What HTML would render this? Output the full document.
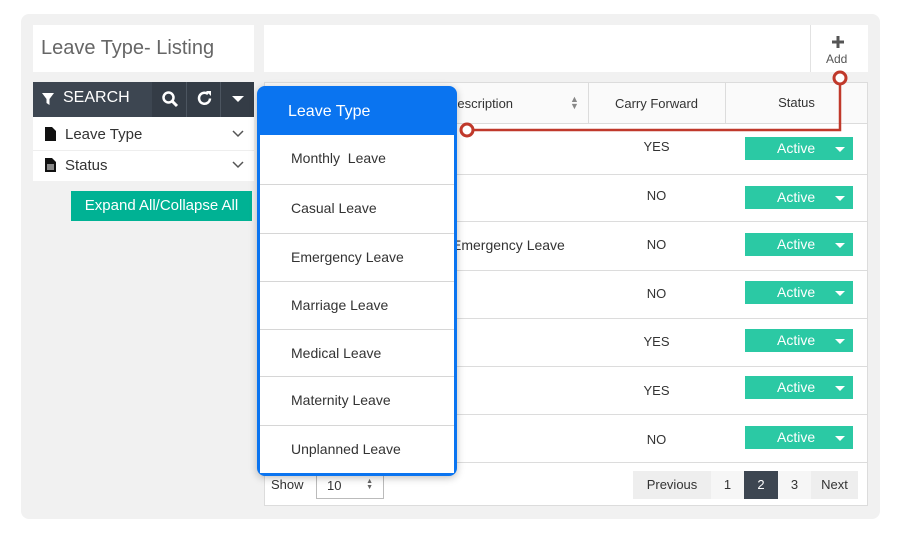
<!DOCTYPE html><html><head><style>
*{box-sizing:border-box;margin:0;padding:0}
body{width:900px;height:534px;background:#fff;font-family:"Liberation Sans",sans-serif;position:relative;overflow:hidden;color:#333}
.a{position:absolute}
.wrap{left:21px;top:14px;width:859px;height:505px;background:#f1f1f1;border-radius:8px}
.row{left:264px;width:604px;border-top:1px solid #dcdcdc}
.yn{left:588px;width:137px;text-align:center;font-size:13px}
.act{left:745px;width:108px;height:23px;background:#2bc9a4;color:#fff;font-size:14px;line-height:23px;padding-left:32px}
.act:after{content:"";position:absolute;right:8px;top:10px;border:5px solid transparent;border-top-color:#fff;border-bottom:0}
.it{left:260px;width:194px;height:49px;border-top:1px solid #d6d6d6;font-size:14px;color:#333;padding-left:31px;line-height:46px;background:#fff}
</style></head><body>
<div class="a wrap"></div>
<div class="a" style="left:33px;top:25px;width:221px;height:47px;background:#fff;font-size:20px;color:#666;padding:12px 0 0 8px">Leave Type- Listing</div>
<div class="a" style="left:264px;top:25px;width:604px;height:47px;background:#fff"></div>
<div class="a" style="left:810px;top:25px;width:1px;height:47px;background:#e2e2e2"></div>
<svg class="a" style="left:831px;top:35px" width="14" height="14"><path d="M7 1v12M1 7h12" stroke="#555" stroke-width="3"/></svg>
<div class="a" style="left:826px;top:52px;font-size:12px;color:#555">Add</div>
<!-- search -->
<div class="a" style="left:33px;top:82px;width:221px;height:35px;background:#3d4651"></div>
<div class="a" style="left:152px;top:82px;width:102px;height:35px;background:#343c46"></div>
<div class="a" style="left:186px;top:82px;width:1px;height:35px;background:#4c5560"></div>
<div class="a" style="left:220px;top:82px;width:1px;height:35px;background:#4c5560"></div>
<svg class="a" style="left:41px;top:92px" width="14" height="14"><path d="M1 1h12L8.5 7v6L5.5 11V7z" fill="#fff"/></svg>
<div class="a" style="left:63px;top:89px;color:#fff;font-size:16px">SEARCH</div>
<svg class="a" style="left:161px;top:90px" width="18" height="18"><circle cx="7.5" cy="7.5" r="5" fill="none" stroke="#fff" stroke-width="2.5"/><path d="M11 11l5 5" stroke="#fff" stroke-width="3"/></svg>
<svg class="a" style="left:196px;top:90px" width="18" height="18"><path d="M14 8.5A5.5 5.5 0 1 1 12 4" fill="none" stroke="#fff" stroke-width="2.5"/><path d="M10 1l5 0 0 5z" fill="#fff"/></svg>
<div class="a" style="left:232px;top:96px;border:6px solid transparent;border-top-color:#fff;border-bottom:0"></div>
<div class="a" style="left:33px;top:117px;width:221px;height:64px;background:#fff"></div>
<div class="a" style="left:33px;top:150px;width:221px;height:1px;background:#eee"></div>
<svg class="a" style="left:45px;top:127px" width="11" height="14"><path d="M0 0h7l4 4v10H0z" fill="#111"/></svg>
<div class="a" style="left:65px;top:126px;font-size:15px">Leave Type</div>
<svg class="a" style="left:45px;top:158px" width="11" height="14"><path d="M0 0h7l4 4v10H0z" fill="#111"/><path d="M2 7h7M2 9h7M2 11h7" stroke="#fff"/></svg>
<div class="a" style="left:65px;top:157px;font-size:15px">Status</div>
<svg class="a" style="left:232px;top:130px" width="12" height="8"><path d="M1 1l5 5 5-5" fill="none" stroke="#555" stroke-width="1.5"/></svg>
<svg class="a" style="left:232px;top:161px" width="12" height="8"><path d="M1 1l5 5 5-5" fill="none" stroke="#555" stroke-width="1.5"/></svg>
<div class="a" style="left:71px;top:191px;width:181px;height:30px;background:#00b294;color:#fff;font-size:15px;line-height:30px;text-align:center">Expand All/Collapse All</div>
<!-- table -->
<div class="a" style="left:264px;top:82px;width:604px;height:424px;background:#fff;border:1px solid #dcdcdc"></div>
<div class="a" style="left:264px;top:82px;width:604px;height:42px;background:#fafafa;border:1px solid #dcdcdc"></div>
<div class="a" style="left:588px;top:82px;width:1px;height:42px;background:#dcdcdc"></div>
<div class="a" style="left:725px;top:82px;width:1px;height:42px;background:#dcdcdc"></div>
<div class="a" style="left:448px;top:96px;font-size:13px">Description</div>
<div class="a" style="left:570px;top:96px;font-size:9px;color:#888;line-height:7px">▲<br>▼</div>
<div class="a" style="left:588px;top:96px;width:137px;text-align:center;font-size:13px">Carry Forward</div>
<div class="a" style="left:725px;top:95px;width:143px;text-align:center;font-size:13px">Status</div>
<div class="a row" style="top:174px"></div><div class="a row" style="top:221px"></div><div class="a row" style="top:270px"></div><div class="a row" style="top:318px"></div><div class="a row" style="top:366px"></div><div class="a row" style="top:414px"></div><div class="a row" style="top:462px"></div>
<div class="a yn" style="top:139px">YES</div><div class="a act" style="top:137px">Active</div>
<div class="a yn" style="top:188px">NO</div><div class="a act" style="top:186px">Active</div>
<div class="a yn" style="top:237px">NO</div><div class="a act" style="top:233px">Active</div><div class="a" style="left:452px;top:237px;font-size:14px">Emergency Leave</div>
<div class="a yn" style="top:286px">NO</div><div class="a act" style="top:281px">Active</div>
<div class="a yn" style="top:334px">YES</div><div class="a act" style="top:329px">Active</div>
<div class="a yn" style="top:383px">YES</div><div class="a act" style="top:376px">Active</div>
<div class="a yn" style="top:432px">NO</div><div class="a act" style="top:426px">Active</div>
<div class="a" style="left:271px;top:477px;font-size:13px">Show</div>
<div class="a" style="left:316px;top:471px;width:68px;height:28px;border:1px solid #bbb;font-size:13px;padding:6px 0 0 10px">10<span style="position:absolute;right:10px;top:7px;font-size:7px;line-height:6px;color:#666">▲<br>▼</span></div>
<div class="a" style="left:633px;top:471px;width:78px;height:28px;background:#eee;font-size:13px;text-align:center;line-height:28px">Previous</div>
<div class="a" style="left:711px;top:471px;width:33px;height:28px;background:#f6f6f6;font-size:13px;text-align:center;line-height:28px">1</div>
<div class="a" style="left:744px;top:471px;width:34px;height:28px;background:#3d4651;color:#fff;font-size:13px;text-align:center;line-height:28px">2</div>
<div class="a" style="left:778px;top:471px;width:33px;height:28px;background:#f6f6f6;font-size:13px;text-align:center;line-height:28px">3</div>
<div class="a" style="left:811px;top:471px;width:47px;height:28px;background:#eee;font-size:13px;text-align:center;line-height:28px">Next</div>
<!-- dropdown -->
<div class="a" style="left:257px;top:86px;width:200px;height:390px;border:3px solid #0a74f0;border-radius:8px;background:#fff;box-shadow:0 2px 8px rgba(0,0,0,.25)"></div>
<div class="a" style="left:259px;top:88px;width:196px;height:47px;background:#0a74f0;border-radius:6px 6px 0 0;color:#fff;font-size:16px;padding:15px 0 0 29px">Leave Type</div>
<div class="a it" style="top:135px;border-top:0">Monthly&nbsp; Leave</div>
<div class="a it" style="top:184px">Casual Leave</div>
<div class="a it" style="top:233px">Emergency Leave</div>
<div class="a it" style="top:281px">Marriage Leave</div>
<div class="a it" style="top:329px">Medical Leave</div>
<div class="a it" style="top:376px">Maternity Leave</div>
<div class="a it" style="top:425px;height:48px">Unplanned Leave</div>
<!-- red connector -->
<svg class="a" style="left:0;top:0" width="900" height="534"><path d="M467 130H840V78" fill="none" stroke="#c0392b" stroke-width="2.5"/><circle cx="467" cy="130" r="6" fill="#fff" stroke="#c0392b" stroke-width="3"/><circle cx="840" cy="78" r="6" fill="#fff" stroke="#c0392b" stroke-width="3"/></svg>
</body></html>
